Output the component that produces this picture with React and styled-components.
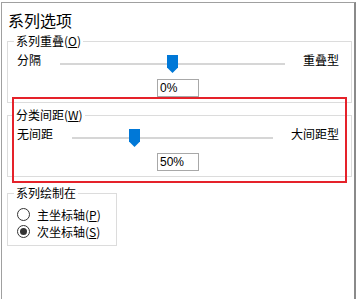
import React from 'react'
import styled, { createGlobalStyle } from 'styled-components'

const GlobalStyle = createGlobalStyle`
  html, body {
    margin: 0;
    padding: 0;
    background: #fff;
  }
  body {
    font-family: "Noto Sans CJK SC", "Liberation Sans", sans-serif;
    font-size: 12px;
    color: #000;
  }
`

function Slider({ left, right, pos, value }) {
  return (
    <>
      <SliderRow>
        <SideLabel>{left}</SideLabel>
        <TrackArea>
          <Track />
          <Thumb pos={pos}>
            <svg width="11" height="18" viewBox="0 0 11 18">
              <path d="M0 0 H11 V12.5 L5.5 18 L0 12.5 Z" fill="#0078d7" />
            </svg>
          </Thumb>
        </TrackArea>
        <SideLabel>{right}</SideLabel>
      </SliderRow>
      <InputRow>
        <ValueBox>{value}</ValueBox>
      </InputRow>
    </>
  )
}

function Radio({ checked, label, hotkey }) {
  return (
    <RadioRow>
      <RadioCircle checked={checked} />
      <span>
        {label}(<u>{hotkey}</u>)
      </span>
    </RadioRow>
  )
}

export default function App() {
  return (
    <>
      <GlobalStyle />
      <Panel>
        <Title>系列选项</Title>

        <Group>
          <Legend>系列重叠(<u>O</u>)</Legend>
          <Slider left="分隔" right="重叠型" pos={0.5} value="0%" />
        </Group>

        <Group gap={5}>
          <Legend>分类间距(<u>W</u>)</Legend>
          <Slider left="无间距" right="大间距型" pos={0.3} value="50%" />
        </Group>

        <Group gap={9} narrow>
          <Legend>系列绘制在</Legend>
          <RadioList>
            <Radio label="主坐标轴" hotkey="P" />
            <Radio checked label="次坐标轴" hotkey="S" />
          </RadioList>
        </Group>

        <Highlight />
      </Panel>
    </>
  )
}

const Panel = styled.div`
  position: relative;
  box-sizing: border-box;
  width: 355px;
  min-height: 297px;
  margin: 2px 0 0 1px;
  padding: 7px 3px 0 5px;
  border: 1px solid #a0a0a0;
  border-right: 2px solid #8a8a8a;
  border-bottom: none;
`

const Title = styled.div`
  margin-left: 1px;
  font-size: 16px;
  line-height: 20px;
`

const Group = styled.fieldset`
  box-sizing: border-box;
  width: ${p => (p.narrow ? '110px' : '345px')};
  margin: ${p => p.gap || 4}px 0 0 0;
  padding: 5px 12px 5px 9px;
  border: 1px solid #dcdcdc;
  min-width: 0;
`

const Legend = styled.legend`
  margin-left: -3px;
  padding: 0 2px;
  font-size: 12px;
  line-height: 14px;
`

const SliderRow = styled.div`
  display: flex;
  align-items: flex-start;
`

const SideLabel = styled.div`
  line-height: 14px;
  white-space: nowrap;
`

const TrackArea = styled.div`
  position: relative;
  flex: 1;
  height: 18px;
  margin: 2px 18px 0 19px;
`

const Track = styled.div`
  position: absolute;
  left: 0;
  right: 0;
  top: 8px;
  height: 2px;
  background: #d6d6d6;
`

const Thumb = styled.div`
  position: absolute;
  top: 0;
  left: calc((100% - 11px) * ${p => p.pos});
  width: 11px;
  height: 18px;
  svg {
    display: block;
  }
`

const InputRow = styled.div`
  display: flex;
  justify-content: center;
  margin-top: 6px;
`

const ValueBox = styled.div`
  box-sizing: border-box;
  width: 42px;
  height: 18px;
  padding-left: 2px;
  border: 1px solid #a8a8a8;
  font-family: "Liberation Sans", sans-serif;
  font-size: 12px;
  line-height: 16px;
`

const RadioList = styled.div`
  display: flex;
  flex-direction: column;
  padding-top: 1px;
`

const RadioRow = styled.div`
  display: flex;
  align-items: center;
  gap: 7px;
  height: 17px;
  line-height: 14px;
  white-space: nowrap;
`

const RadioCircle = styled.span`
  position: relative;
  box-sizing: border-box;
  width: 13px;
  height: 13px;
  flex: none;
  border: 1px solid #333;
  border-radius: 50%;
  background: #fff;
  &::after {
    content: '';
    display: ${p => (p.checked ? 'block' : 'none')};
    position: absolute;
    left: 2px;
    top: 2px;
    width: 7px;
    height: 7px;
    border-radius: 50%;
    background: #333;
  }
`

const Highlight = styled.div`
  position: absolute;
  left: 10px;
  top: 94px;
  box-sizing: border-box;
  width: 335px;
  height: 86px;
  border: 2px solid #e5222a;
  pointer-events: none;
`
